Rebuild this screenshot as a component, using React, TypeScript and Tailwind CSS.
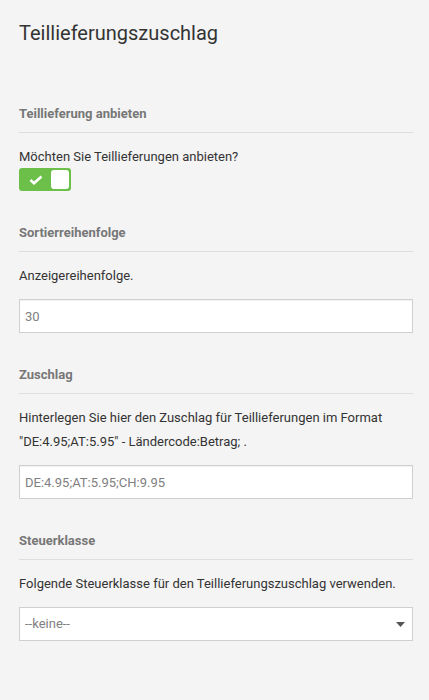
import React, { useState } from 'react';

const Section: React.FC<{ title: string; first?: boolean; children: React.ReactNode }> = ({ title, first, children }) => (
  <div className={first ? 'mt-[57px]' : 'mt-8'}>
    <div className="border-b border-[#dedede] pb-2 text-[13px] font-bold leading-5 text-[#777]">{title}</div>
    {children}
  </div>
);

const App: React.FC = () => {
  const [enabled, setEnabled] = useState(true);

  return (
    <div className="min-h-screen bg-[#f4f4f4] pl-[19px] pr-[16px] pt-[19px] font-['Roboto',sans-serif] text-[13px] text-[#333]">
      <h1 className="text-[20px] leading-7 text-[#333]">Teillieferungszuschlag</h1>

      <Section title="Teillieferung anbieten" first>
        <p className="mt-3 leading-6">Möchten Sie Teillieferungen anbieten?</p>
        <button
          type="button"
          onClick={() => setEnabled(!enabled)}
          className="-mt-[1px] flex h-[23px] w-[52px] items-center justify-between rounded-[3px] bg-[#6cc04a] p-[2px] pl-[10px]"
        >
          <svg width="14" height="10" viewBox="0 0 14 10" fill="none">
            <path d="M1.5 5 L5 8.2 L12.5 1.5" stroke="#fff" strokeWidth="2.6" />
          </svg>
          <span className="h-[19px] w-[18px] rounded-[3px] bg-white" />
        </button>
      </Section>

      <Section title="Sortierreihenfolge">
        <p className="mt-3 leading-6">Anzeigereihenfolge.</p>
        <input
          defaultValue="30"
          className="mt-[11px] block h-[34px] w-full border border-[#cfcfcf] bg-white px-[5px] text-[13px] text-[#808080] shadow-[inset_0_1px_1px_rgba(0,0,0,0.06)] outline-none"
        />
      </Section>

      <Section title="Zuschlag">
        <p className="mt-3 leading-6">
          Hinterlegen Sie hier den Zuschlag für Teillieferungen im Format "DE:4.95;AT:5.95" - Ländercode:Betrag; .
        </p>
        <input
          defaultValue="DE:4.95;AT:5.95;CH:9.95"
          className="mt-[11px] block h-[34px] w-full border border-[#cfcfcf] bg-white px-[5px] text-[13px] text-[#808080] shadow-[inset_0_1px_1px_rgba(0,0,0,0.06)] outline-none"
        />
      </Section>

      <Section title="Steuerklasse">
        <p className="mt-3 leading-6">Folgende Steuerklasse für den Teillieferungszuschlag verwenden.</p>
        <div className="mt-[11px] flex h-[34px] w-full items-center justify-between border border-[#cfcfcf] bg-white px-[5px] text-[#808080]">
          <span>--keine--</span>
          <svg width="9" height="5" viewBox="0 0 9 5" className="mr-[2px]">
            <path d="M0 0 H9 L4.5 5 Z" fill="#555" />
          </svg>
        </div>
      </Section>
    </div>
  );
};

export default App;
